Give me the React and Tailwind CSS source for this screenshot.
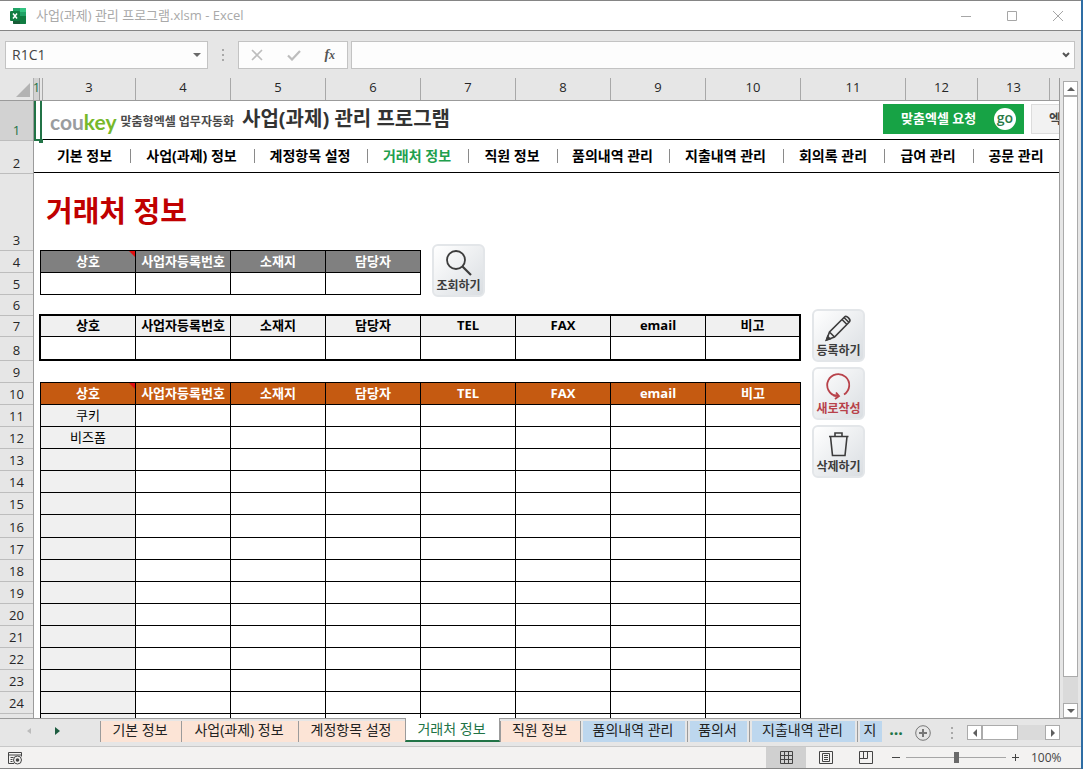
import React from 'react';

const FONT = "font-['Open_Sans','Noto_Sans_CJK_KR',sans-serif]";

const columns = [
  { label: '3', width: 'w-[93px]' },
  { label: '4', width: 'w-[95px]' },
  { label: '5', width: 'w-[95px]' },
  { label: '6', width: 'w-[95px]' },
  { label: '7', width: 'w-[95px]' },
  { label: '8', width: 'w-[95px]' },
  { label: '9', width: 'w-[95px]' },
  { label: '10', width: 'w-[95px]' },
  { label: '11', width: 'w-[105px]' },
  { label: '12', width: 'w-[72px]' },
  { label: '13', width: 'w-[72px]' },
];

const rowHeights = {
  1: 'h-10',
  2: 'h-[33px]',
  3: 'h-[77px]',
  6: 'h-[21px]',
  7: 'h-[21px]',
  8: 'h-6',
  16: 'h-[23px]',
};

const rows = Array.from({ length: 24 }, (_, i) => i + 1);

const menu = [
  { label: '기본 정보', width: 'w-[90px]' },
  { label: '사업(과제) 정보', width: 'w-[124px]' },
  { label: '계정항목 설정', width: 'w-[113px]' },
  { label: '거래처 정보', width: 'w-[101px]', active: true },
  { label: '직원 정보', width: 'w-[89px]' },
  { label: '품의내역 관리', width: 'w-[112px]' },
  { label: '지출내역 관리', width: 'w-[114px]' },
  { label: '회의록 관리', width: 'w-[101px]' },
  { label: '급여 관리', width: 'w-[89px]' },
  { label: '공문 관리', width: 'w-[86px]' },
];

const searchFields = ['상호', '사업자등록번호', '소재지', '담당자'];
const fields = [...searchFields, 'TEL', 'FAX', 'email', '비고'];
const companies = ['쿠키', '비즈폼'];

const sheets = [
  { label: '기본 정보', width: 'w-[81px]', tone: 'peach' },
  { label: '사업(과제) 정보', width: 'w-[117px]', tone: 'peach' },
  { label: '계정항목 설정', width: 'w-[107px]', tone: 'peach' },
  { label: '거래처 정보', width: 'w-[95px]', tone: 'active' },
  { label: '직원 정보', width: 'w-[80px]', tone: 'peach' },
  { label: '품의내역 관리', width: 'w-[107px]', tone: 'blue' },
  { label: '품의서', width: 'w-[62px]', tone: 'blue' },
  { label: '지출내역 관리', width: 'w-[108px]', tone: 'blue' },
  { label: '지', width: 'w-[25px]', tone: 'blue' },
];

function ExcelLogo() {
  return (
    <svg className="h-4 w-4" viewBox="0 0 16 16">
      <rect x="3" y="0" width="13" height="16" rx="1" fill="#21a366" />
      <path d="M3 0h7v4H3z" fill="#21a366" />
      <path d="M10 0h5a1 1 0 0 1 1 1v3h-6z" fill="#33c481" />
      <path d="M3 8h7v8H4a1 1 0 0 1-1-1z" fill="#185c37" />
      <path d="M10 8h6v7a1 1 0 0 1-1 1h-5z" fill="#107c41" />
      <rect x="0" y="3" width="10" height="10" rx="1" fill="#107c41" />
      <path d="M3 5.5l4 5M7 5.5l-4 5" stroke="#fff" strokeWidth="1.5" />
    </svg>
  );
}

function TitleBar() {
  return (
    <header className="flex h-[31px] shrink-0 items-center border-y border-[#858585] bg-white pl-2.5">
      <ExcelLogo />
      <h1 className="ml-2.5 flex-1 text-[13px] text-[#a9a9a9]">사업(과제) 관리 프로그램.xlsm - Excel</h1>
      <div className="flex text-[#a6a6a6]">
        <button aria-label="최소화" className="flex h-7 w-[46px] items-center justify-center">
          <svg className="h-3 w-3" viewBox="0 0 12 12" stroke="currentColor"><path d="M1 6.5h10" /></svg>
        </button>
        <button aria-label="최대화" className="flex h-7 w-[46px] items-center justify-center">
          <svg className="h-3 w-3" viewBox="0 0 12 12" fill="none" stroke="currentColor"><path d="M1.500 1.500h9v9h-9z" /></svg>
        </button>
        <button aria-label="닫기" className="flex h-7 w-[46px] items-center justify-center">
          <svg className="h-3 w-3" viewBox="0 0 12 12" stroke="currentColor"><path d="M1 1l10 10M11 1L1 11" /></svg>
        </button>
      </div>
    </header>
  );
}

function Dots() {
  return (
    <svg className="h-3 w-1" viewBox="0 0 4 12" fill="#a8a8a8">
      <path d="M1 0h2v2H1zM1 5h2v2H1zM1 10h2v2H1z" />
    </svg>
  );
}

function FormulaBar() {
  return (
    <div className="flex h-[47px] shrink-0 items-center pl-[5px] pr-1.5">
      <div className="flex h-7 w-[203px] items-center border border-[#c3c3c3] bg-[#fdfdfd]">
        <input aria-label="이름 상자" defaultValue="R1C1" className="min-w-0 flex-1 bg-transparent pl-1.5 text-sm text-[#444] outline-none" />
        <button aria-label="이름 목록" className="flex h-full w-5 items-center justify-center">
          <svg className="h-1 w-2" viewBox="0 0 8 4" fill="#6a6a6a"><path d="M0 0h8L4 4z" /></svg>
        </button>
      </div>
      <div className="flex w-[30px] justify-center"><Dots /></div>
      <div className="flex h-7 w-[110px] items-center justify-around border border-[#c3c3c3] bg-[#fdfdfd]">
        <button aria-label="취소">
          <svg className="h-3 w-3" viewBox="0 0 12 12" stroke="#bdbdbd" strokeWidth="1.600"><path d="M1 1l10 10M11 1L1 11" /></svg>
        </button>
        <button aria-label="입력">
          <svg className="h-3 w-3.5" viewBox="0 0 14 12" fill="none" stroke="#bdbdbd" strokeWidth="2.200"><path d="M1 6.500l4 4L13 2" /></svg>
        </button>
        <button aria-label="함수 삽입" className="font-['Liberation_Serif',serif] text-sm leading-4 font-bold text-[#555] italic">
          f<span className="text-xs">x</span>
        </button>
      </div>
      <div className="ml-[3px] flex h-7 flex-1 items-center border border-[#c3c3c3] bg-[#fdfdfd]">
        <input aria-label="수식 입력줄" className="min-w-0 flex-1 bg-transparent px-2 text-sm outline-none" />
        <button aria-label="수식 입력줄 확장" className="flex h-full w-4 items-center justify-center">
          <svg className="h-2 w-2" viewBox="0 0 8 8" fill="none" stroke="#555" strokeWidth="2"><path d="M1 2l3 3 3-3" /></svg>
        </button>
      </div>
    </div>
  );
}

function ColumnHeader() {
  return (
    <div className="flex h-[23px] shrink-0 border-b border-[#9b9b9b] text-[13px] text-[#262626]">
      <div className="flex w-[34px] shrink-0 items-end justify-end border-r border-[#b0b0b0] pr-[3px] pb-[3px]">
        <svg className="h-3.5 w-3.5" viewBox="0 0 14 14" fill="#b3b3b3"><path d="M14 0v14H0z" /></svg>
      </div>
      <div className="flex w-1.5 shrink-0 items-center justify-center border-r border-[#9b9b9b] bg-[#d2d2d2] pb-0.5 text-[#217346]">1</div>
      <div className="w-[3px] shrink-0 border-r border-[#a8a8a8]" />
      {columns.map((col) => (
        <div key={col.label} className={`${col.width} flex shrink-0 items-center justify-center border-r border-[#a8a8a8] pb-0.5`}>
          {col.label}
        </div>
      ))}
    </div>
  );
}

function RowHeader() {
  return (
    <div className="w-[34px] shrink-0 border-r border-[#9b9b9b] text-[13px] text-[#262626]">
      {rows.map((row) => (
        <div
          key={row}
          className={`${rowHeights[row] || 'h-[22px]'} ${row === 1 ? 'bg-[#d2d2d2] text-[#217346]' : ''} flex items-end justify-center border-b border-[#bdbdbd] leading-5`}
        >
          {row}
        </div>
      ))}
    </div>
  );
}

function Banner() {
  return (
    <div className="flex h-[39px] items-start border-b border-black pl-4">
      <div className="flex h-[38px] items-center">
        <span className="pt-1 font-['Lato',sans-serif] text-[21px] leading-6 font-bold text-[#9a9c9f]">
          cou<span className="text-[#76b82a]">key</span>
        </span>
        <span className="ml-1 pt-1 text-xs font-bold text-[#4a4a4a]">맞춤형엑셀 업무자동화</span>
      </div>
      <h2 className="ml-2 text-xl leading-9 font-bold whitespace-nowrap text-[#333]">사업(과제) 관리 프로그램</h2>
      <div className="ml-auto flex shrink-0 items-center gap-[7px] pt-[3px]">
        <button className="flex h-[30px] w-[141px] items-center justify-between bg-[#17a345] pr-2 pl-[18px] text-[13px] font-bold text-white">
          맞춤엑셀 요청
          <span className="flex h-[22px] w-[22px] items-center justify-center rounded-full bg-white pb-0.5 text-sm leading-4 font-semibold text-[#2b7a48]">go</span>
        </button>
        <button className="h-[30px] w-7 overflow-hidden border border-r-0 border-[#dcdcdc] bg-[#f2f2f2] pl-[17px] text-left text-[13px] font-bold text-[#444]">엑</button>
      </div>
    </div>
  );
}

function Menu() {
  return (
    <nav className="flex h-[33px] items-center overflow-hidden border-b border-black pl-[7px]">
      {menu.map((item) => (
        <a
          key={item.label}
          href="#"
          className={`${item.width} ${item.active ? 'text-[#1fa04e]' : 'text-black'} flex h-3.5 shrink-0 items-center justify-center border-r border-[#8a8a8a] pr-0.5 text-sm leading-none font-bold whitespace-nowrap last:border-r-0`}
        >
          {item.label}
        </a>
      ))}
    </nav>
  );
}

function NoteMark() {
  return (
    <svg className="absolute top-0 right-0 h-1.5 w-1.5" viewBox="0 0 6 6" fill="#e01010">
      <path d="M0 0h6v6z" />
    </svg>
  );
}

function HeadCell({ children, note }) {
  return (
    <th className="relative w-[95px] border-r border-b border-black p-0 pb-0.5 text-[13px] leading-4 font-bold">
      {children}
      {note && <NoteMark />}
    </th>
  );
}

function SearchTable() {
  return (
    <table className="w-[381px] table-fixed border-separate border-spacing-0 border-t border-l border-black">
      <thead>
        <tr className="h-[22px] bg-[#808080] text-white">
          {searchFields.map((f, i) => <HeadCell key={f} note={i === 0}>{f}</HeadCell>)}
        </tr>
      </thead>
      <tbody>
        <tr className="h-[22px]">
          {searchFields.map((f) => <td key={f} className="border-r border-b border-black p-0" />)}
        </tr>
      </tbody>
    </table>
  );
}

function EntryTable() {
  return (
    <table className="w-[762px] table-fixed border-separate border-spacing-0 border-2 border-black">
      <thead>
        <tr className="h-[21px] bg-[#f0f0f0]">
          {fields.map((f) => (
            <th key={f} className="w-[95px] border-r border-b border-black p-0 pb-0.5 text-[13px] leading-4 font-bold last:w-[93px] last:border-r-0">{f}</th>
          ))}
        </tr>
      </thead>
      <tbody>
        <tr className="h-[22px]">
          {fields.map((f) => <td key={f} className="border-r border-black p-0 last:border-r-0" />)}
        </tr>
      </tbody>
    </table>
  );
}

function ListTable() {
  return (
    <table className="ml-px w-[761px] table-fixed border-separate border-spacing-0 border-t border-l border-black">
      <thead>
        <tr className="h-[22px] bg-[#c55a11] text-white">
          {fields.map((f, i) => <HeadCell key={f} note={i === 0}>{f}</HeadCell>)}
        </tr>
      </thead>
      <tbody>
        {[...rows.slice(10), 25].map((row, i) => (
          <tr key={row} className={rowHeights[row] || 'h-[22px]'}>
            {fields.map((f, c) => (
              <td key={f} className="border-r border-b border-black p-0 pb-0.5 text-center text-[13px] leading-4 first:bg-[#f0f0f0]">
                {c === 0 ? companies[i] : null}
              </td>
            ))}
          </tr>
        ))}
      </tbody>
    </table>
  );
}

function ActionButton({ label, color = 'text-[#3c3c3c]', children }) {
  return (
    <button className={`${color} flex h-[53px] w-[53px] shrink-0 flex-col items-center justify-end rounded-md border-2 border-[#e3e6e9] bg-linear-to-br from-white to-[#dadee2]`}>
      <svg className="h-[30px] w-[30px]" viewBox="0 0 30 30" fill="none" stroke="currentColor" strokeWidth="1.600">
        {children}
      </svg>
      <span className="text-xs leading-[18px] font-bold whitespace-nowrap">{label}</span>
    </button>
  );
}

function Sheet() {
  return (
    <main className="relative min-w-0 flex-1 overflow-hidden bg-white">
      <Banner />
      <Menu />
      <h2 className="h-[71px] pt-[22px] pl-3 text-[29px] leading-8 font-bold text-[#c00000]">거래처 정보</h2>
      <div className="flex h-[65px] items-start gap-[11px] pl-1.5">
        <div className="pt-1.5"><SearchTable /></div>
        <ActionButton label="조회하기">
          <circle cx="12" cy="13" r="9" strokeWidth="1.800" />
          <path d="M18.500 19.500L27 28" strokeWidth="2.200" />
        </ActionButton>
      </div>
      <div className="flex items-start gap-[11px] pl-[5px]">
        <div className="flex flex-col gap-[21px] pt-[5px]">
          <EntryTable />
          <ListTable />
        </div>
        <div className="flex flex-col gap-[5px]">
          <ActionButton label="등록하기">
            <path d="M2.500 28l3-8L20.500 5q1.500-1.500 4 .800t.800 4.200L10.500 25z M5.500 20l5 5 M18 7.500l5 5 M20 5.500l5 5" />
            <path d="M2.500 28l1.200-3.500 2.300 2.300z" fill="currentColor" />
          </ActionButton>
          <ActionButton label="새로작성" color="text-[#b8424a]">
            <path d="M20 24.500a11 11 0 1 0-7.500 1.500" strokeWidth="1.800" />
            <path d="M9.500 25.500h5M12 22.500l3 3.500-4 3" strokeWidth="1.800" />
          </ActionButton>
          <ActionButton label="삭제하기">
            <path d="M5 8.500h19.500M6.500 8.500l2 19h12.500l2-19M11 8.500V5h7v3.500" />
          </ActionButton>
        </div>
      </div>
      {/* selected cell R1C1 */}
      <div className="absolute top-0 left-0 h-10 w-2 border-2 border-t-0 border-[#217346]" />
      <div className="absolute top-[38px] left-[5px] h-1 w-1 bg-[#217346]" />
    </main>
  );
}

function ScrollButton({ label, path, size }) {
  return (
    <button aria-label={label} className={`${size} flex shrink-0 items-center justify-center border border-[#ababab] bg-white`}>
      <svg className="h-2 w-2" viewBox="0 0 8 8" fill="#5f5f5f"><path d={path} /></svg>
    </button>
  );
}

function VerticalScroll() {
  return (
    <div className="flex w-[22px] shrink-0 flex-col border-l border-[#9b9b9b] pt-[3px] pl-[3px]">
      <ScrollButton label="위로" size="h-[15px] w-[15px]" path="M0 6h8L4 2z" />
      <div className="flex w-[15px] flex-1 flex-col bg-[#dadada]">
        <div className="flex-1 border border-[#ababab] bg-white" />
        <div className="h-[26px]" />
      </div>
      <ScrollButton label="아래로" size="h-[15px] w-[15px]" path="M0 2h8L4 6z" />
    </div>
  );
}

function SheetTab({ label, width, tone }) {
  if (tone === 'active') {
    return (
      <button className={`${width} -mt-px h-6 shrink-0 border-x border-b-2 border-x-[#9b9b9b] border-b-[#217346] bg-white pr-0.5 pb-px text-sm leading-5 text-[#217346]`}>
        {label}
      </button>
    );
  }
  return (
    <span className={`${width} mt-0.5 flex h-[21px] shrink-0 border-l border-[#9b9b9b] ${tone === 'blue' ? 'px-0.5 last:pr-0' : ''}`}>
      <button className={`${tone === 'blue' ? 'bg-[#bdd7ee]' : 'bg-[#fce4d6]'} flex-1 pr-0.5 pb-1 text-sm leading-4 whitespace-nowrap text-[#222]`}>
        {label}
      </button>
    </span>
  );
}

function SheetTabs() {
  return (
    <div className="flex h-7 shrink-0 border-t border-[#9b9b9b] pr-[21px]">
      <div className="flex w-[100px] shrink-0 items-center gap-5 pb-1 pl-[26px]">
        <button aria-label="이전 시트">
          <svg className="h-2 w-2" viewBox="0 0 8 8" fill="#bcbcbc"><path d="M5 1v6L1 4z" /></svg>
        </button>
        <button aria-label="다음 시트">
          <svg className="h-2 w-2" viewBox="0 0 8 8" fill="#1d5c40"><path d="M1 0v8l5-4z" /></svg>
        </button>
      </div>
      <div className="flex shrink-0 items-start">
        {sheets.map((s) => <SheetTab key={s.label} {...s} />)}
      </div>
      <button className="w-7 pb-2 text-base leading-5 font-bold text-[#217346]">...</button>
      <button aria-label="새 시트" className="flex w-[25px] items-center justify-center">
        <svg className="h-4 w-4" viewBox="0 0 16 16" fill="none" stroke="#777"><circle cx="8" cy="8" r="7.300" /><path d="M8 4v8M4 8h8" strokeWidth="2" /></svg>
      </button>
      <div className="flex flex-1 items-center justify-between pl-[15px]">
        <Dots />
        <div className="flex h-[15px] w-[93px] bg-[#dadada]">
          <ScrollButton label="왼쪽" size="h-[15px] w-[15px]" path="M6 0v8L2 4z" />
          <div className="w-9 border border-[#ababab] bg-white" />
          <div className="flex-1" />
          <ScrollButton label="오른쪽" size="h-[15px] w-[15px]" path="M2 0v8l4-4z" />
        </div>
      </div>
    </div>
  );
}

function StatusBar() {
  return (
    <footer className="flex h-[23px] shrink-0 items-center border-t border-b border-t-[#c8c8c8] border-b-[#858585] bg-[#f3f2f1] pl-2 text-[#444]">
      <button aria-label="매크로 기록">
        <svg className="h-3.5 w-3.5" viewBox="0 0 14 14" fill="none" stroke="#444">
          <path d="M6 12.500H.5V1.500h13v4M.5 4h13M2.500 6.500h3M2.500 8.500h2M2.500 10.500h2" />
          <circle cx="9.500" cy="9" r="4" />
          <circle cx="9.500" cy="9" r="1.800" fill="#444" stroke="none" />
        </svg>
      </button>
      <div className="ml-auto flex h-full items-center">
        <button aria-label="기본 보기" className="flex h-full w-10 items-center justify-center bg-[#d0d0d0]">
          <svg className="h-[13px] w-[13px]" viewBox="0 0 13 13" fill="none" stroke="#444"><path d="M.5.5h12v12H.5zM.5 4.500h12M.5 8.500h12M4.500.5v12M8.500.5v12" /></svg>
        </button>
        <button aria-label="페이지 레이아웃" className="flex h-full w-10 items-center justify-center">
          <svg className="h-[13px] w-3.5" viewBox="0 0 14 13" fill="none" stroke="#444"><path d="M.5.5h13v12H.5zM3.500 2.500h7v8h-7zM5 4.500h4M5 6.500h4M5 8.500h4" /></svg>
        </button>
        <button aria-label="페이지 나누기 미리 보기" className="flex h-full w-10 items-center justify-center">
          <svg className="h-[13px] w-3.5" viewBox="0 0 14 13" fill="none" stroke="#444"><path d="M.5.5h13v12H.5zM.5 7.500h8v-7M4.500.5v7" /></svg>
        </button>
        <button aria-label="축소" className="flex w-5 justify-center">
          <svg className="h-2 w-2" viewBox="0 0 8 8" stroke="#444"><path d="M0 3.500h8" /></svg>
        </button>
        <input
          type="range"
          aria-label="확대/축소"
          defaultValue="50"
          className="h-3 w-[100px] appearance-none bg-transparent bg-[linear-gradient(#a6a6a6,#a6a6a6)] bg-[length:100%_1px] bg-center bg-no-repeat [&::-webkit-slider-thumb]:h-[11px] [&::-webkit-slider-thumb]:w-[5px] [&::-webkit-slider-thumb]:appearance-none [&::-webkit-slider-thumb]:bg-[#6a6a6a]"
        />
        <button aria-label="확대" className="flex w-[18px] justify-center">
          <svg className="h-[7px] w-[7px]" viewBox="0 0 7 7" stroke="#444"><path d="M0 3.500h7M3.500 0v7" /></svg>
        </button>
        <span className="w-[57px] pl-[7px] text-xs">100%</span>
      </div>
    </footer>
  );
}

export default function App() {
  return (
    <div className={`${FONT} flex h-screen flex-col overflow-hidden border-r-2 border-[#2e6da4] bg-[#e6e6e6]`}>
      <TitleBar />
      <FormulaBar />
      <div className="flex min-h-0 flex-1">
        <div className="flex min-w-0 flex-1 flex-col overflow-hidden">
          <ColumnHeader />
          <div className="flex min-h-0 flex-1">
            <RowHeader />
            <Sheet />
          </div>
        </div>
        <VerticalScroll />
      </div>
      <SheetTabs />
      <StatusBar />
    </div>
  );
}
